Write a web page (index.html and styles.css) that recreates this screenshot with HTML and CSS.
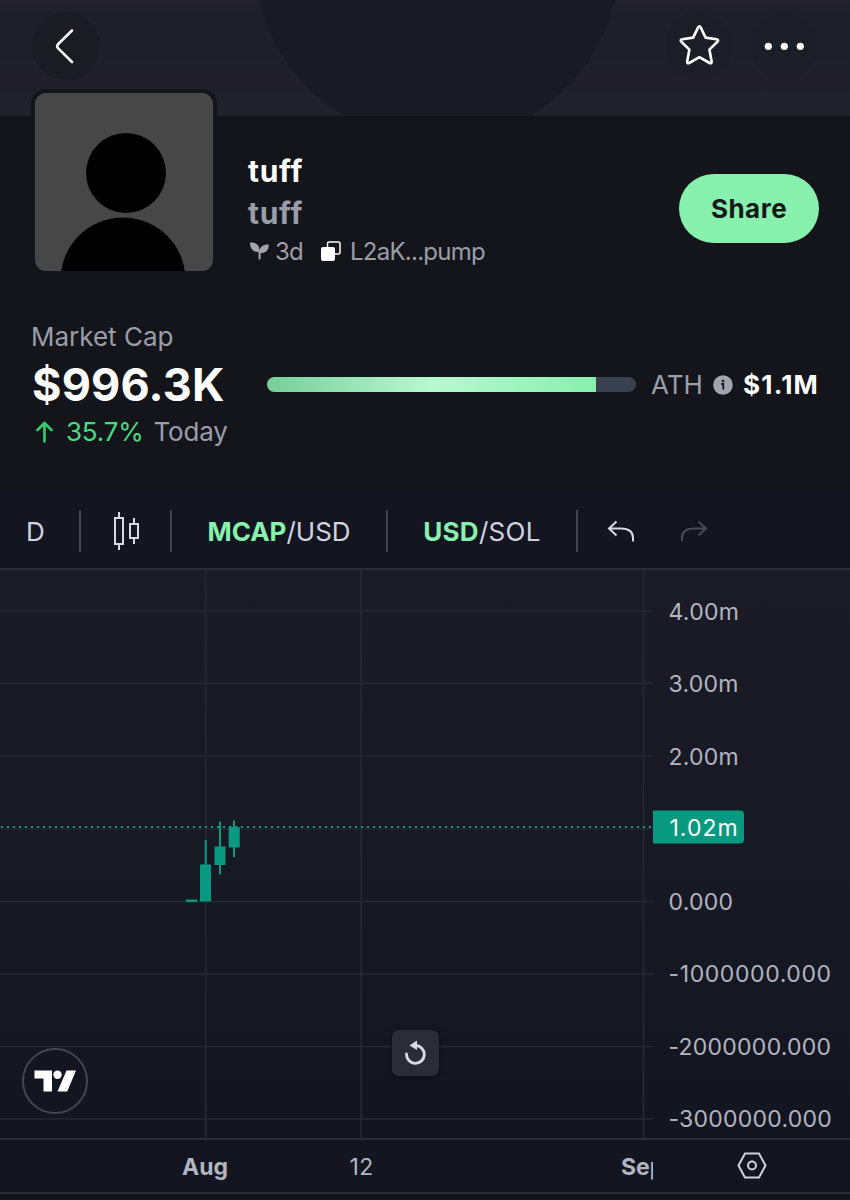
FILE: index.html
```html
<!DOCTYPE html>
<html lang="en">
<head>
  <meta charset="UTF-8">
  <title>tuff</title>
  <meta name="viewport" content="width=device-width, initial-scale=1">
  <link rel="stylesheet" href="styles.css">
</head>
<body>

<header class="banner">
  <button class="icon-btn back" aria-label="Back">
    <svg width="68" height="68" viewBox="0 0 68 68"><path d="M40 18.500 L26.200 32 Q24.200 34.200 26.200 36.400 L40 50"/></svg>
  </button>
  <div class="actions">
    <button class="icon-btn" aria-label="Favorite">
      <svg width="68" height="68" viewBox="0 0 68 68"><path d="M33 15.600 Q34.400 13.200 35.800 15.600 L40.600 25.600 L51.600 27.200 Q54.200 27.800 52.400 29.800 L44.400 37.600 L46.600 49.200 Q47 51.800 44.600 51 L34.400 45.200 L24.200 51 Q21.800 51.800 22.200 49.200 L24.400 37.600 L16.400 29.800 Q14.600 27.800 17.200 27.200 L28.200 25.600 Z"/></svg>
    </button>
    <button class="icon-btn" aria-label="More">
      <svg class="dots" width="68" height="68" viewBox="0 0 68 68"><circle cx="18.300" cy="34.300" r="3.600"/><circle cx="34.300" cy="34.300" r="3.600"/><circle cx="50.300" cy="34.300" r="3.600"/></svg>
    </button>
  </div>
</header>

<section class="profile">
  <svg class="avatar" width="178" height="178" viewBox="0 0 178 178">
    <rect width="178" height="178" fill="#474747"/>
    <circle cx="91" cy="80" r="40"/>
    <circle cx="88" cy="187" r="62.500"/>
  </svg>
  <div class="info">
    <h1>tuff</h1>
    <h2>tuff</h2>
    <div class="meta">
      <svg class="leaf" width="20" height="20" viewBox="0 0 20 20"><path d="M0 1.500 C5.500 1 9.400 3.600 9.600 9.300 C10.500 5.500 13.500 3.400 18.800 3.600 C18.800 9 16 12.300 10.600 12.300 V18 Q9.600 19.200 8.600 18 V11.200 C3.200 11.200 0 7.500 0 1.500Z"/></svg>
      <span class="age">3d</span>
      <svg class="copy" width="20" height="20" viewBox="0 0 20 20"><path d="M6.500 6 V2.500 Q6.500 1 8 1 H17.500 Q19 1 19 2.500 V11.500 Q19 13 17.500 13 H14" fill="none" stroke="#fff" stroke-width="1.500"/><rect x="0" y="6" width="14" height="14" rx="2" fill="#fff"/></svg>
      <span class="address">L2aK...pump</span>
    </div>
  </div>
  <button class="share">Share</button>
</section>

<section class="market">
  <div class="label">Market Cap</div>
  <div class="cap-row">
    <div class="cap">$996.3K</div>
    <div class="bar"><div class="fill"></div></div>
    <div class="ath">ATH</div>
    <svg class="tip" width="20" height="20" viewBox="0 0 20 20"><circle cx="10" cy="10" r="9.800" fill="#a1a3af"/><circle cx="10" cy="6" r="1.300" fill="#14151a"/><path d="M8.200 9 H10.300 V14.500" fill="none" stroke="#14151a" stroke-width="1.800"/></svg>
    <div class="high">$1.1M</div>
  </div>
  <div class="change">
    <svg width="18" height="22" viewBox="0 0 18 22"><path d="M8.500 20.500 V2.500 M1.500 9 L8.500 2 L15.500 9"/></svg>
    <span class="up">35.7%</span>
    <span>Today</span>
  </div>
</section>

<div class="toolbar">
  <div class="tool interval">D</div>
  <div class="tool candles">
    <svg width="28" height="40" viewBox="0 0 28 40"><path d="M3 7 H11 V33 H3Z M7 1 V7 M7 33 V39 M18 13 H26 V27 H18Z M22 7 V13 M22 27 V33"/></svg>
  </div>
  <div class="tool pair"><b>MCAP</b>/USD</div>
  <div class="tool currency"><b>USD</b>/SOL</div>
  <div class="tool history">
    <svg width="28" height="22" viewBox="0 0 28 22"><path d="M9.500 1.500 L2 8.500 L9.500 15.500 M2 8.500 H14 Q26 8.500 26 18 V21.500"/></svg>
    <svg class="redo" width="28" height="22" viewBox="0 0 28 22"><path d="M18.500 1.500 L26 8.500 L18.500 15.500 M26 8.500 H14 Q2 8.500 2 18 V21.500"/></svg>
  </div>
</div>

<div class="chart">
  <svg width="850" height="568" viewBox="0 570 850 568">
    <g class="grid">
      <path d="M0 611H653M0 683.500H653M0 756H653M0 829H653M0 901.500H653M0 974H653M0 1046.500H653M0 1119H653"/>
      <path d="M205.700 570V1138M361 570V1138M643.500 570V1138"/>
    </g>
    <g class="series">
      <rect x="186" y="899.500" width="11" height="2.500"/>
      <rect x="200" y="864.500" width="11" height="37"/>
      <rect x="204.700" y="840" width="2" height="25"/>
      <rect x="214.500" y="846.500" width="11" height="18.500"/>
      <rect x="219" y="821.500" width="2" height="53"/>
      <rect x="228.700" y="827" width="11" height="20.500"/>
      <rect x="233" y="820.500" width="2" height="36.500"/>
    </g>
    <path class="last" d="M1 827H653"/>
    <path class="tag" d="M653 810.500 H740 Q744 810.500 744 814.500 V839.500 Q744 843.500 740 843.500 H653Z"/>
    <g class="prices">
      <text x="668.500" y="619.500">4.00m</text>
      <text x="668.500" y="692">3.00m</text>
      <text x="668.500" y="764.500">2.00m</text>
      <text class="current" x="669.500" y="835.500">1.02m</text>
      <text x="668.500" y="909.500">0.000</text>
      <text class="wide" x="668.500" y="982">-1000000.000</text>
      <text x="668.500" y="1054.500">-2000000.000</text>
      <text x="668.500" y="1127">-3000000.000</text>
    </g>
  </svg>
  <div class="tv-logo">
    <svg width="42" height="22" viewBox="0 0 42 22"><path d="M0.500 0.500 H18 V21.500 H9.500 V8.500 H0.500Z M32.500 0.500 H42 L33.200 21.500 H23.500Z"/><circle cx="23.500" cy="4.700" r="4.200"/></svg>
  </div>
  <button class="reset" aria-label="Reset chart">
    <svg width="46" height="46" viewBox="0 0 46 46"><path d="M14.500 24 A8.900 8.900 0 1 0 23.500 15.500" fill="none" stroke="#d9dbe6" stroke-width="2.800" stroke-linecap="round"/><path d="M17.500 15.500 L25 10.500 V20Z" fill="#d9dbe6"/></svg>
  </button>
</div>

<footer class="timeline">
  <svg width="850" height="52" viewBox="0 1140 850 52">
    <text x="205" y="1175" text-anchor="middle" class="month">Aug</text>
    <text x="361.500" y="1175" text-anchor="middle">12</text>
    <svg x="0" y="1140" width="653" height="52" viewBox="0 1140 653 52"><text x="621" y="1175" class="month">Sep</text></svg>
    <path class="gear" d="M745 1153.500 H759 L765.500 1165.500 L759 1177.500 H745 L738.500 1165.500Z"/>
    <circle class="gear" cx="752" cy="1165.500" r="4"/>
  </svg>
</footer>

</body>
</html>
```

FILE: styles.css
```css
* {
  box-sizing: border-box;
}

body {
  margin: 0;
  width: 850px;
  height: 1200px;
  overflow: hidden;
  background: #14151a;
  color: #9b9da9;
  font-family: Inter, "Liberation Sans", sans-serif;
}

button {
  border: none;
  padding: 0;
  font-family: inherit;
}

svg {
  display: block;
  flex: none;
}

.banner {
  height: 116px;
  padding: 12px 32px 0;
  display: flex;
  justify-content: space-between;
  align-items: flex-start;
  background:
    radial-gradient(circle at 437px -41px, #191b24 182px, transparent 183px),
    linear-gradient(#23202a, #1e2029 12px, #1e2029 60px, #211f29 76px, #211f29 88px, #1f212b 94px);
}

.icon-btn {
  width: 68px;
  height: 68px;
  border-radius: 50%;
  background: rgba(20, 21, 28, 0.1);
}

.icon-btn path {
  fill: none;
  stroke: #fff;
  stroke-width: 2.6;
  stroke-linecap: round;
  stroke-linejoin: round;
}

.back {
  background: #1b1c23;
}

.dots {
  fill: #fff;
}

.actions {
  display: flex;
  gap: 17px;
}

.profile {
  display: flex;
  height: 158px;
  padding: 0 31px;
}

/* avatar overlaps the banner */
.avatar {
  box-sizing: content-box;
  margin-top: -27px;
  border: 4px solid #14151a;
  border-radius: 15px;
}

.info {
  margin-left: 31px;
  padding-top: 34px;
  flex: 1;
}

h1,
h2 {
  margin: 0;
  font-size: 30px;
  line-height: 42px;
  font-weight: 700;
  letter-spacing: 0.7px;
  font-variant-ligatures: none;
}

h1 {
  color: #fff;
}

h2 {
  color: #9a9ca9;
}

.meta {
  display: flex;
  align-items: center;
  height: 34px;
  font-size: 24px;
  letter-spacing: -0.75px;
}

.leaf {
  margin: 0 5px 0 2px;
  fill: #a1a3af;
}

.copy {
  margin: 0 9px 0 18px;
}

.share {
  width: 140px;
  height: 69px;
  margin-top: 58px;
  border-radius: 35px;
  background: #88f1ad;
  color: #16191c;
  font-size: 26px;
  font-weight: 700;
  letter-spacing: 0.5px;
}

.market {
  height: 219px;
  padding: 47px 30px 0 31px;
  font-size: 26px;
}

.label {
  line-height: 32px;
}

.cap-row {
  display: flex;
  align-items: center;
  height: 63px;
}

.cap-row > * {
  flex: none;
}

.cap {
  width: 236px;
  padding-left: 1px;
  color: #fff;
  font-size: 45px;
  font-weight: 700;
  letter-spacing: 0.2px;
}

.bar {
  width: 369px;
  height: 15px;
  border-radius: 8px;
  background: #394050;
  overflow: hidden;
}

.fill {
  width: 329px;
  height: 100%;
  background: linear-gradient(90deg, #77ce99, #b9f8d0 50%, #87f0ad);
}

.ath {
  width: 62px;
  margin-left: 15px;
}

.high {
  margin-left: 10px;
  color: #fff;
  font-weight: 700;
  letter-spacing: 1.2px;
}

.change {
  display: flex;
  align-items: center;
  gap: 10px;
  height: 31px;
  padding-left: 5px;
  letter-spacing: -0.2px;
}

.change path {
  fill: none;
  stroke: #2fcf6b;
  stroke-width: 2.6;
  stroke-linecap: round;
  stroke-linejoin: round;
}

.up {
  margin-left: 2px;
  color: #48dc80;
}

.toolbar {
  display: flex;
  align-items: center;
  height: 77px;
  border-bottom: 2px solid #292b35;
  background: #131620;
  color: #d1d3e0;
  font-size: 26px;
}

.tool {
  display: flex;
  align-items: center;
  justify-content: center;
  height: 42px;
  border-right: 2px solid #42444e;
}

.pair,
.currency,
.interval {
  padding-top: 2px;
}

.tool path {
  fill: none;
  stroke: #d8d9e6;
  stroke-width: 2;
}

.tool b {
  color: #88f1ad;
}

.interval {
  width: 81px;
  padding-right: 8px;
}

.candles {
  width: 91px;
}

.pair {
  width: 216px;
}

.currency {
  width: 190px;
  letter-spacing: 0.3px;
}

.history {
  gap: 45px;
  padding-left: 29px;
  border: none;
}

.tool .redo path {
  stroke: #484a54;
}

.chart {
  position: relative;
  height: 568px;
  background: linear-gradient(#1a1b26, #131620);
}

.grid path {
  fill: none;
  stroke: #262832;
  stroke-width: 1.6;
}

.series,
.tag {
  fill: #089981;
}

.last {
  stroke: #089981;
  stroke-width: 2;
  stroke-dasharray: 2 4;
}

.prices text,
.timeline text {
  fill: #b2b4c0;
  font-size: 23px;
  letter-spacing: 0.25px;
}

.prices .wide {
  letter-spacing: 0.6px;
}

.prices .current {
  fill: #fff;
  letter-spacing: 1px;
}

/* badge and button float over the plot */
.tv-logo {
  position: absolute;
  left: 22px;
  top: 478px;
  width: 66px;
  height: 66px;
  display: flex;
  align-items: center;
  justify-content: center;
  border: 2px solid #434550;
  border-radius: 50%;
  background: #131620;
  fill: #fff;
}

.reset {
  position: absolute;
  left: 392px;
  top: 460px;
  width: 47px;
  height: 46px;
  border-radius: 7px;
  background: #2a2c37;
  box-shadow: 0 2px 6px rgba(0, 0, 0, 0.4);
}

.timeline {
  height: 56px;
  border-top: 2px solid #292b35;
  border-bottom: 2px solid #292b35;
  background: #131620;
}

.timeline .month {
  font-weight: 700;
  letter-spacing: 0;
}

.gear {
  fill: none;
  stroke: #d1d3e0;
  stroke-width: 2;
}
```
